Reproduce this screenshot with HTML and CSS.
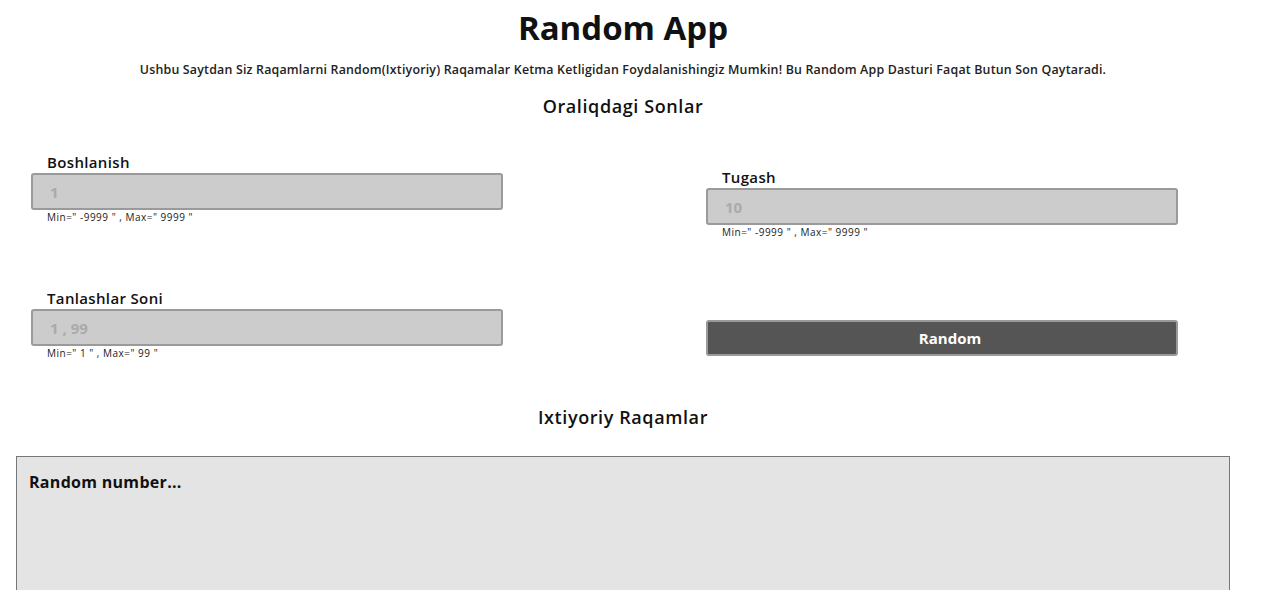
FILE: index.html
```html
<!DOCTYPE html>
<html lang="uz">
<head>
<meta charset="utf-8">
<title>Random App</title>
<link rel="stylesheet" href="styles.css">
</head>
<body>
<main class="page">
  <h1 class="title">Random App</h1>
  <p class="lead">Ushbu Saytdan Siz Raqamlarni Random(Ixtiyoriy) Raqamalar Ketma Ketligidan Foydalanishingiz Mumkin! Bu Random App Dasturi Faqat Butun Son Qaytaradi.</p>
  <h2 class="section">Oraliqdagi Sonlar</h2>
  <div class="grid">
    <div class="field">
      <label class="label" for="start">Boshlanish</label>
      <input class="input" id="start" type="text" placeholder="1">
      <small class="hint">Min=" -9999 " , Max=" 9999 "</small>
    </div>
    <div class="field field-right">
      <label class="label" for="end">Tugash</label>
      <input class="input" id="end" type="text" placeholder="10">
      <small class="hint">Min=" -9999 " , Max=" 9999 "</small>
    </div>
    <div class="field">
      <label class="label" for="count">Tanlashlar Soni</label>
      <input class="input" id="count" type="text" placeholder="1 , 99">
      <small class="hint">Min=" 1 " , Max=" 99 "</small>
    </div>
    <div class="field field-right action">
      <button class="btn" type="button">Random</button>
    </div>
  </div>
  <h2 class="section section-result">Ixtiyoriy Raqamlar</h2>
  <textarea class="output" placeholder="Random number..."></textarea>
</main>
</body>
</html>
```
FILE: styles.css
```css
* { box-sizing: border-box; }
html, body { margin: 0; padding: 0; background: #fff; }
body {
  font-family: "Open Sans", "Noto Sans", sans-serif;
  color: #111;
}
.page {
  width: 1246px;
  display: flex;
  flex-direction: column;
}
.title {
  margin: 8px 0 0;
  font-size: 33px;
  line-height: 40px;
  font-weight: 700;
  text-align: center;
}
.lead {
  margin: 14px 0 0;
  font-size: 12.4px;
  line-height: 16px;
  font-weight: 600;
  letter-spacing: 0.19px;
  text-align: center;
  color: #222;
}
.section {
  margin: 16px 0 0;
  font-size: 18px;
  line-height: 24px;
  font-weight: 600;
  letter-spacing: 0.6px;
  text-align: center;
}
.grid {
  margin-top: 34px;
  display: grid;
  grid-template-columns: 623px 623px;
  row-gap: 49px;
}
.field {
  display: flex;
  flex-direction: column;
  padding-left: 31px;
}
.field-right {
  padding-left: 83px;
  padding-top: 15px;
}
.action { padding-top: 32px; }
.label {
  margin-left: 16px;
  font-size: 15px;
  line-height: 20px;
  font-weight: 600;
  letter-spacing: 0.35px;
  margin-bottom: 1px;
}
.input {
  width: 472px;
  height: 37px;
  margin: 0;
  padding: 0 0 0 17px;
  background: #cccccc;
  border: 2px solid #9a9a9a;
  border-radius: 3px;
  font-family: inherit;
  font-size: 15px;
  font-weight: 700;
  color: #333;
  outline: none;
}
.input::placeholder { color: #aaaaaa; }
.hint {
  margin-left: 16px;
  font-size: 10px;
  line-height: 14px;
  letter-spacing: 0.5px;
  color: #222;
}
.btn {
  width: 472px;
  height: 36px;
  margin: 0;
  padding: 0 0 0 16px;
  background: #555555;
  border: 2px solid #9a9a9a;
  border-radius: 3px;
  color: #fff;
  font-family: "Open Sans", sans-serif;
  font-size: 15px;
  font-weight: 700;
  cursor: pointer;
}
.section-result { margin-top: 45px; }
.output {
  margin: 27px 0 0 16px;
  width: 1214px;
  height: 200px;
  padding: 14px 12px;
  background: #e4e4e4;
  border: 1px solid #777;
  border-radius: 0;
  font-family: "Open Sans", sans-serif;
  font-size: 16px;
  font-weight: 700;
  letter-spacing: 0.3px;
  resize: vertical;
  outline: none;
}
.output::placeholder { color: #111; }
```
